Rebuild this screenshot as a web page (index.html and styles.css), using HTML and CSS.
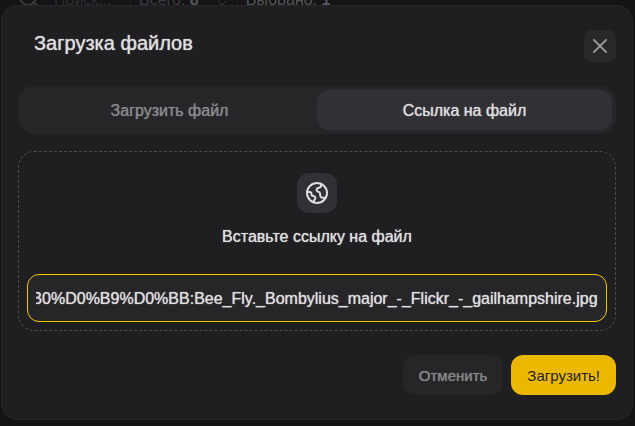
FILE: index.html
```html
<!DOCTYPE html>
<html lang="ru">
<head>
<meta charset="utf-8">
<meta name="viewport" content="width=device-width, initial-scale=1">
<title>Загрузка файлов</title>
<link rel="stylesheet" href="styles.css">
</head>
<body>
<div class="toolbar">
  <svg class="search-icon" viewBox="0 0 24 24" width="24" height="24" aria-hidden="true"><circle cx="10" cy="9" r="8"/><path d="M15 14l5 4"/></svg>
  <span class="search-text">Поиск...</span>
  <span class="stat">Всего: <b>8</b></span>
  <svg class="sort-icon" viewBox="0 0 10 16" width="10" height="16" aria-hidden="true"><path d="M1 6l4-4 4 4M1 9l4 4 4-4"/></svg>
  <span class="stat selected">Выбрано: <b>1</b></span>
</div>
<div class="overlay">
  <form class="modal" role="dialog" aria-labelledby="title">
    <header class="modal-header">
      <h1 class="title" id="title">Загрузка файлов</h1>
      <button class="close" type="button" aria-label="Закрыть">
        <svg viewBox="0 0 16 16" width="16" height="16" aria-hidden="true"><path d="M2 2l12 12M14 2L2 14"/></svg>
      </button>
    </header>
    <div class="tabs" role="tablist">
      <button class="tab" type="button" role="tab" aria-selected="false">Загрузить файл</button>
      <button class="tab active" type="button" role="tab" aria-selected="true">Ссылка на файл</button>
    </div>
    <section class="dropzone">
      <span class="globe">
        <svg viewBox="0 0 24 24" width="24" height="24" aria-hidden="true"><circle cx="12" cy="12" r="10"/><path d="M16 3.200V5C16 6.500 14.500 6.700 13 7C11.500 7.400 11.200 9.200 12.200 10.200C13.200 11 14.800 10.700 15 12.200C15.200 14 14.800 15.800 16.500 16.500C17.800 17 19 16.800 20.300 16.800M2.300 11H4.500C6 11 6.500 12 6.500 13C6.500 14.500 7 15 8.200 15C9.600 15 10.500 16 10.300 17.400C10.100 18.800 8.700 19 8.500 21"/></svg>
      </span>
      <label class="label" for="file-url">Вставьте ссылку на файл</label>
      <input class="url" id="file-url" type="text" value="%D0%A4%D0%B0%D0%B9%D0%BB:Bee_Fly._Bombylius_major_-_Flickr_-_gailhampshire.jpg">
    </section>
    <footer class="actions">
      <button class="button cancel" type="button">Отменить</button>
      <button class="button submit" type="submit">Загрузить!</button>
    </footer>
  </form>
</div>
<script src="script.js"></script>
</body>
</html>
```
FILE: styles.css
```css
* {
  box-sizing: border-box;
}

body {
  margin: 0;
  min-height: 100vh;
  overflow: hidden;
  background: #141416;
  color: #dedede;
  font-family: "Liberation Sans", sans-serif;
  font-size: 16px;
}

button,
input {
  font: inherit;
}

svg {
  fill: none;
  stroke: currentColor;
  stroke-linecap: round;
  stroke-linejoin: round;
}

.toolbar {
  position: absolute;
  top: -12px;
  left: 18px;
  display: flex;
  align-items: center;
  height: 24px;
  color: #3c3c3e;
  white-space: nowrap;
}

.search-icon {
  stroke-width: 2;
}

.search-text {
  width: 88px;
  padding-left: 12px;
  color: #2b2b2d;
}

.stat {
  padding-left: 8px;
  border-left: 1px solid #202022;
}

.stat b {
  color: #555;
}

.sort-icon {
  margin: 0 10px 0 18px;
}

.selected {
  color: #555;
}

.overlay {
  position: relative;
  padding: 5px 2px 6px 1px;
}

.modal {
  padding: 24px 16px;
  border: 1px solid #262628;
  border-radius: 16px;
  background: #1f1f21;
  text-shadow: 0 0 1px currentColor;
}

.modal-header {
  display: flex;
  align-items: flex-start;
  justify-content: space-between;
  padding-left: 16px;
}

.title {
  margin: 0;
  font-size: 20px;
  font-weight: 500;
  line-height: 26px;
}

.close {
  display: grid;
  place-items: center;
  width: 32px;
  height: 32px;
  padding: 0;
  border: 0;
  border-radius: 8px;
  background: #28282a;
  color: #949496;
  stroke-width: 2;
}

.tabs {
  display: flex;
  margin-top: 24px;
  padding: 4px;
  border-radius: 16px;
  background: #262628;
}

.tab {
  flex: 1;
  height: 40px;
  padding: 2px 8px 0;
  border: 0;
  border-radius: 12px;
  background: transparent;
  color: #89898b;
}

.tab,
.button,
.url {
  text-shadow: 0 0 1px currentColor;
}

.tab.active {
  background: #313135;
  color: #dedede;
}

.dropzone {
  display: flex;
  flex-direction: column;
  align-items: center;
  margin-top: 17px;
  padding: 21px 8px 8px;
  border: 1px dashed #4b4b4d;
  border-radius: 16px;
}

.globe {
  display: grid;
  place-items: center;
  width: 40px;
  height: 40px;
  border-radius: 12px;
  background: #313135;
  stroke-width: 2;
}

.label {
  margin: 12px 0 25px;
  line-height: 24px;
}

.url {
  width: 100%;
  height: 48px;
  padding: 2px 8px 0;
  border: 1px solid #fac800;
  border-radius: 12px;
  outline: 0;
  background: #262628;
  color: #dedede;
}

.actions {
  display: flex;
  justify-content: flex-end;
  gap: 8px;
  margin-top: 24px;
}

.button {
  height: 40px;
  padding: 0 16px;
  border: 0;
  border-radius: 12px;
  font-size: 15px;
}

.cancel {
  background: #262628;
  color: #858587;
}

.submit {
  background: #ebb800;
  color: #1f1f21;
  text-shadow: none;
}
```
FILE: script.js
```js
const url = document.getElementById("file-url");
url.scrollLeft = url.scrollWidth;
```
